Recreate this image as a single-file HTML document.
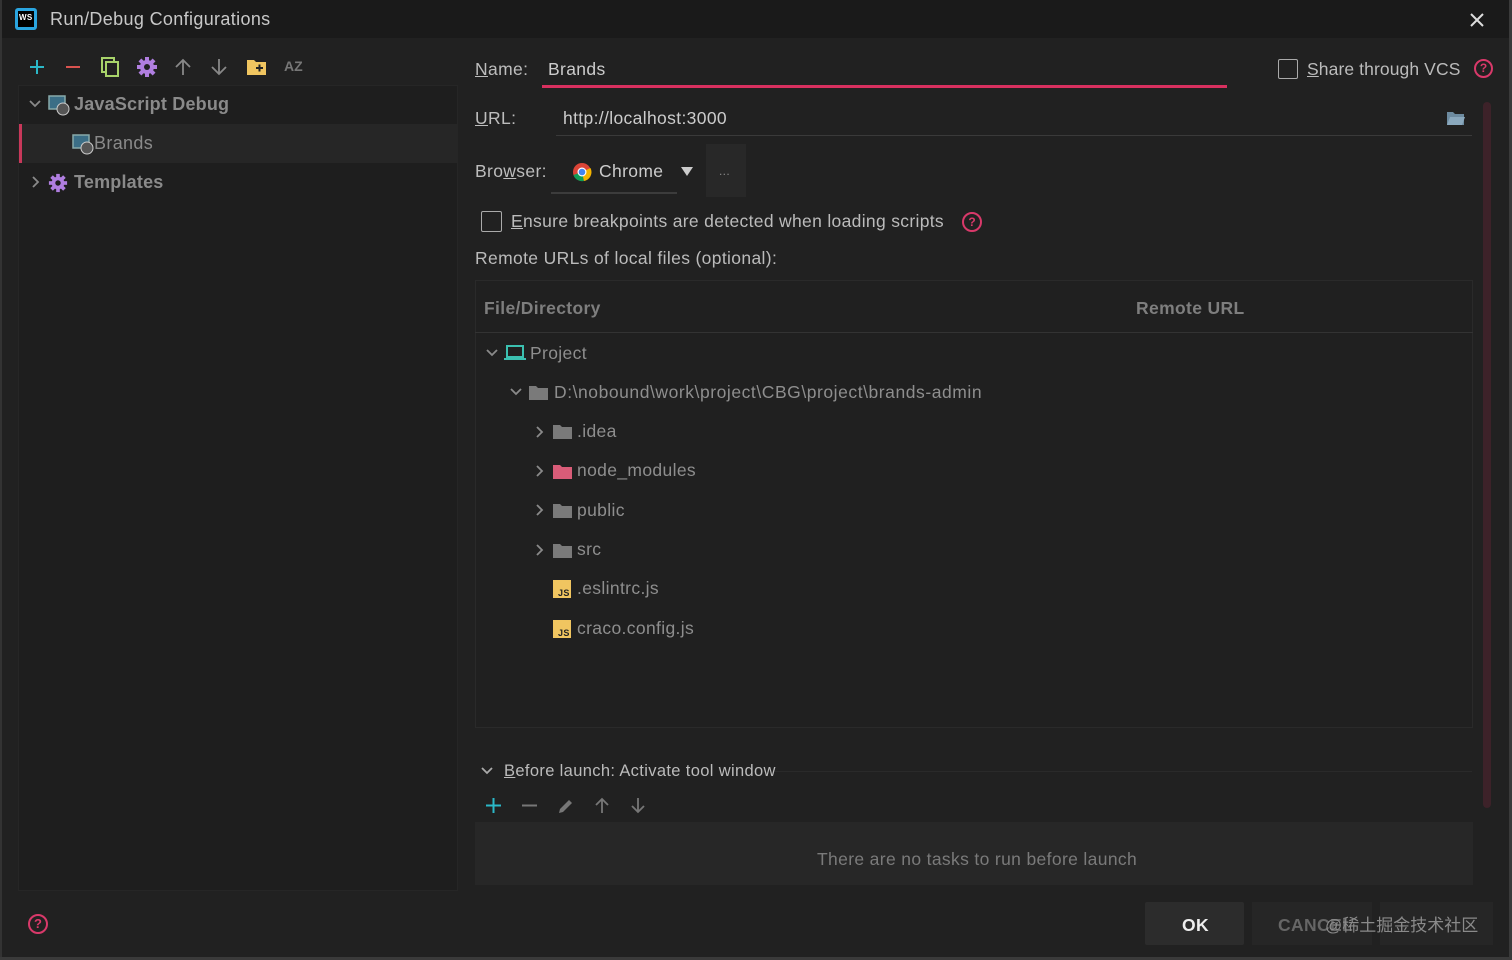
<!DOCTYPE html>
<html><head><meta charset="utf-8"><style>
*{margin:0;padding:0;box-sizing:border-box}
body{width:1512px;height:960px;background:#212121;font-family:"Liberation Sans","Noto Sans CJK SC",sans-serif;color:#bdbdbd;position:relative;overflow:hidden;font-size:17.5px;letter-spacing:0.35px}
.a{position:absolute;white-space:nowrap}
u{text-decoration:underline}
svg.ch path{fill:none;stroke:#8a8a8a;stroke-width:1.8}
</style></head><body>
<div class="a" style="left:0;top:0;width:1512px;height:38px;background:#1a1a1a"></div>
<div class="a" style="left:0;top:0;width:2px;height:960px;background:#333"></div>
<div class="a" style="right:0;top:0;width:3px;height:960px;background:#3a3a3a"></div>
<div class="a" style="left:0;bottom:0;width:1512px;height:3px;background:#3a3a3a"></div>
<svg class="a" style="left:14px;top:7px" width="24" height="24"><rect x="1" y="1" width="22" height="22" rx="3" fill="#2aa5e0"/><rect x="4" y="4" width="16" height="16" fill="#000"/><text x="5" y="13" font-size="8" font-weight="bold" fill="#fff" font-family="Liberation Sans">WS</text></svg>
<div class="a" style="left:50px;top:9px;font-size:18px;color:#c8c8c8">Run/Debug Configurations</div>
<svg class="a" style="left:1469px;top:12px" width="16" height="16"><path d="M2 2L14 14M14 2L2 14" stroke="#ddd" stroke-width="2"/></svg>

<svg class="a" style="left:29px;top:59px" width="16" height="16"><path d="M8 1v14M1 8h14" stroke="#2bb8c8" stroke-width="2"/></svg>
<svg class="a" style="left:65px;top:59px" width="16" height="16"><path d="M1 8h14" stroke="#d9534f" stroke-width="2"/></svg>
<svg class="a" style="left:100px;top:57px" width="20" height="20"><rect x="2" y="1" width="12" height="14" fill="none" stroke="#a8d36a" stroke-width="2"/><rect x="6" y="5" width="12" height="14" fill="#212121" stroke="#a8d36a" stroke-width="2"/></svg>
<svg class="a" style="left:136px;top:56px" width="22" height="22" viewBox="0 0 22 22"><g fill="#b07ee0"><circle cx="11" cy="11" r="7"/><rect x="9" y="1" width="4" height="20"/><rect x="1" y="9" width="20" height="4"/><rect x="9" y="1" width="4" height="20" transform="rotate(45 11 11)"/><rect x="9" y="1" width="4" height="20" transform="rotate(-45 11 11)"/></g><circle cx="11" cy="11" r="3" fill="#212121"/></svg>
<svg class="a" style="left:174px;top:58px" width="18" height="18"><path d="M9 17V2M2 9l7-7 7 7" fill="none" stroke="#888" stroke-width="1.8"/></svg>
<svg class="a" style="left:210px;top:58px" width="18" height="18"><path d="M9 1v15M2 9l7 7 7-7" fill="none" stroke="#888" stroke-width="1.8"/></svg>
<svg class="a" style="left:246px;top:58px" width="21" height="18"><path d="M1 2h7l2 2h10v13H1z" fill="#f0c560"/><path d="M10 10h7M13.5 6.5v7" stroke="#222" stroke-width="2"/></svg>
<div class="a" style="left:284px;top:58px;font-size:14px;font-weight:bold;color:#777;letter-spacing:0">AZ</div>

<div class="a" style="left:18px;top:85px;width:440px;height:806px;background:#1e1e1e;border:1px solid #262626"></div>
<div class="a" style="left:19px;top:124px;width:438px;height:39px;background:#262626"></div>
<div class="a" style="left:19px;top:124px;width:3px;height:39px;background:#c8385a"></div>
<svg class="a ch" style="left:28px;top:98px" width="14" height="12"><path d="M2 3l5 5 5-5"/></svg>
<svg class="a" style="left:48px;top:94px" width="22" height="22"><rect x="1" y="2" width="16" height="13" fill="#3b6e86" stroke="#8aa" stroke-width="1.5"/><circle cx="15" cy="15" r="6" fill="#555" stroke="#ccc" stroke-width="1"/></svg>
<div class="a" style="left:74px;top:94px;font-size:18px;font-weight:bold;color:#8a8a8a;letter-spacing:0.2px">JavaScript Debug</div>
<svg class="a" style="left:72px;top:133px" width="22" height="22"><rect x="1" y="2" width="16" height="13" fill="#3b6e86" stroke="#8aa" stroke-width="1.5"/><circle cx="15" cy="15" r="6" fill="#555" stroke="#ccc" stroke-width="1"/></svg>
<div class="a" style="left:94px;top:133px;font-size:18px;color:#8a8a8a">Brands</div>
<svg class="a ch" style="left:30px;top:175px" width="12" height="14"><path d="M3 2l5 5-5 5"/></svg>
<svg class="a" style="left:48px;top:173px" width="20" height="20" viewBox="0 0 22 22"><g fill="#b07ee0"><circle cx="11" cy="11" r="7"/><rect x="9" y="1" width="4" height="20"/><rect x="1" y="9" width="20" height="4"/><rect x="9" y="1" width="4" height="20" transform="rotate(45 11 11)"/><rect x="9" y="1" width="4" height="20" transform="rotate(-45 11 11)"/></g><circle cx="11" cy="11" r="3" fill="#1e1e1e"/></svg>
<div class="a" style="left:74px;top:172px;font-size:18px;font-weight:bold;color:#8a8a8a;letter-spacing:0.2px">Templates</div>

<div class="a" style="left:28px;top:914px;width:20px;height:20px;border:2px solid #d9396a;border-radius:50%;color:#d9396a;font-size:13px;text-align:center;line-height:16px;font-weight:bold;letter-spacing:0">?</div>

<div class="a" style="left:475px;top:59px"><u>N</u>ame:</div>
<div class="a" style="left:548px;top:59px;color:#ccc">Brands</div>
<div class="a" style="left:542px;top:85px;width:685px;height:3px;background:#d8305f"></div>
<div class="a" style="left:1278px;top:59px;width:20px;height:20px;border:1.5px solid #aaa;border-radius:2px"></div>
<div class="a" style="left:1307px;top:59px;color:#bbb;letter-spacing:0.1px"><u>S</u>hare through VCS</div>
<div class="a" style="left:1474px;top:59px;width:19px;height:19px;border:2px solid #d9396a;border-radius:50%;color:#d9396a;font-size:12px;text-align:center;line-height:15px;font-weight:bold;letter-spacing:0">?</div>

<div class="a" style="left:475px;top:108px"><u>U</u>RL:</div>
<div class="a" style="left:563px;top:108px;color:#ccc">http://localhost:3000</div>
<div class="a" style="left:556px;top:135px;width:916px;height:1px;background:#3a3a3a"></div>
<svg class="a" style="left:1446px;top:110px" width="20" height="16"><path d="M1 2h6l2 2h9v11H1z" fill="#6d8ba0"/><path d="M1 15l3-8h15l-3 8z" fill="#8aa8bd"/></svg>

<div class="a" style="left:475px;top:161px">Bro<u>w</u>ser:</div>
<svg class="a" style="left:572px;top:162px" width="20" height="20"><circle cx="10" cy="10" r="9" fill="#db4437"/><path d="M10 10L1.5 13A9 9 0 0 0 12 19z" fill="#0f9d58"/><path d="M10 10L12 19A9 9 0 0 0 18.5 6z" fill="#f4b400"/><circle cx="10" cy="10" r="4.5" fill="#fff"/><circle cx="10" cy="10" r="3.3" fill="#4285f4"/></svg>
<div class="a" style="left:599px;top:161px;color:#ccc">Chrome</div>
<svg class="a" style="left:681px;top:167px" width="12" height="10"><path d="M0 0h12L6 9z" fill="#ccc"/></svg>
<div class="a" style="left:551px;top:192px;width:126px;height:2px;background:#3c3c3c"></div>
<div class="a" style="left:706px;top:144px;width:40px;height:53px;background:#282828"></div>
<div class="a" style="left:719px;top:164px;font-size:12px;color:#888">...</div>

<div class="a" style="left:481px;top:211px;width:21px;height:21px;border:1.5px solid #aaa;border-radius:2px"></div>
<div class="a" style="left:511px;top:211px;color:#bbb;letter-spacing:0.32px"><u>E</u>nsure breakpoints are detected when loading scripts</div>
<div class="a" style="left:962px;top:212px;width:20px;height:20px;border:2px solid #d9396a;border-radius:50%;color:#d9396a;font-size:12px;text-align:center;line-height:16px;font-weight:bold;letter-spacing:0">?</div>
<div class="a" style="left:475px;top:248px;color:#bbb">Remote URLs of local files (optional):</div>

<div class="a" style="left:475px;top:280px;width:998px;height:448px;border:1px solid #2a2a2a;background:#202020"></div>
<div class="a" style="left:475px;top:332px;width:998px;height:1px;background:#333"></div>
<div class="a" style="left:484px;top:298px;font-weight:bold;color:#7e7e7e">File/Directory</div>
<div class="a" style="left:1136px;top:298px;font-weight:bold;color:#7e7e7e">Remote URL</div>

<svg class="a ch" style="left:485px;top:347px" width="14" height="12"><path d="M2 3l5 5 5-5"/></svg>
<svg class="a" style="left:504px;top:344px" width="22" height="18"><rect x="3" y="2" width="16" height="11" fill="none" stroke="#3bc0b0" stroke-width="2"/><path d="M0 15h22" stroke="#3bc0b0" stroke-width="2"/></svg>
<div class="a" style="left:530px;top:343px;color:#8e8e8e">Project</div>
<svg class="a ch" style="left:509px;top:386px" width="14" height="12"><path d="M2 3l5 5 5-5"/></svg>
<svg class="a" style="left:529px;top:385px" width="19" height="15"><path d="M0 1h7l2 2h10v12H0z" fill="#7a7a7a"/></svg>
<div class="a" style="left:554px;top:382px;color:#8e8e8e;letter-spacing:0.55px">D:\nobound\work\project\CBG\project\brands-admin</div>

<svg class="a ch" style="left:534px;top:425px" width="12" height="14"><path d="M3 2l5 5-5 5"/></svg>
<svg class="a" style="left:553px;top:424px" width="19" height="15"><path d="M0 1h7l2 2h10v12H0z" fill="#7a7a7a"/></svg>
<div class="a" style="left:577px;top:421px;color:#8e8e8e">.idea</div>
<svg class="a ch" style="left:534px;top:464px" width="12" height="14"><path d="M3 2l5 5-5 5"/></svg>
<svg class="a" style="left:553px;top:464px" width="19" height="15"><path d="M0 1h7l2 2h10v12H0z" fill="#d95c78"/></svg>
<div class="a" style="left:577px;top:460px;color:#8e8e8e">node_modules</div>
<svg class="a ch" style="left:534px;top:503px" width="12" height="14"><path d="M3 2l5 5-5 5"/></svg>
<svg class="a" style="left:553px;top:503px" width="19" height="15"><path d="M0 1h7l2 2h10v12H0z" fill="#7a7a7a"/></svg>
<div class="a" style="left:577px;top:500px;color:#8e8e8e">public</div>
<svg class="a ch" style="left:534px;top:543px" width="12" height="14"><path d="M3 2l5 5-5 5"/></svg>
<svg class="a" style="left:553px;top:543px" width="19" height="15"><path d="M0 1h7l2 2h10v12H0z" fill="#7a7a7a"/></svg>
<div class="a" style="left:577px;top:539px;color:#8e8e8e">src</div>
<svg class="a" style="left:553px;top:580px" width="18" height="18"><rect width="18" height="18" fill="#f0c560"/><text x="5" y="16" font-size="9" font-weight="bold" fill="#222" font-family="Liberation Sans">JS</text></svg>
<div class="a" style="left:577px;top:578px;color:#8e8e8e">.eslintrc.js</div>
<svg class="a" style="left:553px;top:620px" width="18" height="18"><rect width="18" height="18" fill="#f0c560"/><text x="5" y="16" font-size="9" font-weight="bold" fill="#222" font-family="Liberation Sans">JS</text></svg>
<div class="a" style="left:577px;top:618px;color:#8e8e8e">craco.config.js</div>

<div class="a" style="left:1483px;top:102px;width:8px;height:706px;background:#3d2229;border-radius:4px"></div>

<svg class="a ch" style="left:480px;top:765px" width="14" height="12"><path d="M2 3l5 5 5-5" style="stroke:#aaa"/></svg>
<div class="a" style="left:504px;top:762px;font-size:16.5px;color:#bbb"><u>B</u>efore launch: Activate tool window</div>
<div class="a" style="left:775px;top:771px;width:697px;height:1px;background:#2a2a2a"></div>
<svg class="a" style="left:486px;top:798px" width="15" height="15"><path d="M7.5 0v15M0 7.5h15" stroke="#2bb8c8" stroke-width="2"/></svg>
<svg class="a" style="left:522px;top:798px" width="15" height="15"><path d="M0 7.5h15" stroke="#777" stroke-width="2"/></svg>
<svg class="a" style="left:557px;top:797px" width="18" height="18"><path d="M2 16l1-4 9-9 3 3-9 9z" fill="#777"/></svg>
<svg class="a" style="left:594px;top:797px" width="16" height="17"><path d="M8 16V2M2 8l6-6 6 6" fill="none" stroke="#777" stroke-width="1.8"/></svg>
<svg class="a" style="left:630px;top:797px" width="16" height="17"><path d="M8 1v14M2 9l6 6 6-6" fill="none" stroke="#777" stroke-width="1.8"/></svg>
<div class="a" style="left:475px;top:822px;width:998px;height:63px;background:#272727"></div>
<div class="a" style="left:817px;top:849px;color:#7a7a7a">There are no tasks to run before launch</div>

<div class="a" style="left:1145px;top:902px;width:99px;height:43px;background:#2c2c2c;border-radius:2px"></div>
<div class="a" style="left:1182px;top:915px;font-weight:bold;color:#eee">OK</div>
<div class="a" style="left:1252px;top:902px;width:120px;height:43px;background:#262626"></div>
<div class="a" style="left:1380px;top:902px;width:113px;height:43px;background:#262626"></div>
<div class="a" style="left:1278px;top:915px;font-weight:bold;color:#666">CANCEL</div>
<div class="a" style="left:1325px;top:911px;font-size:17px;color:#8a8a8a;letter-spacing:0">@稀土掘金技术社区</div>
</body></html>
